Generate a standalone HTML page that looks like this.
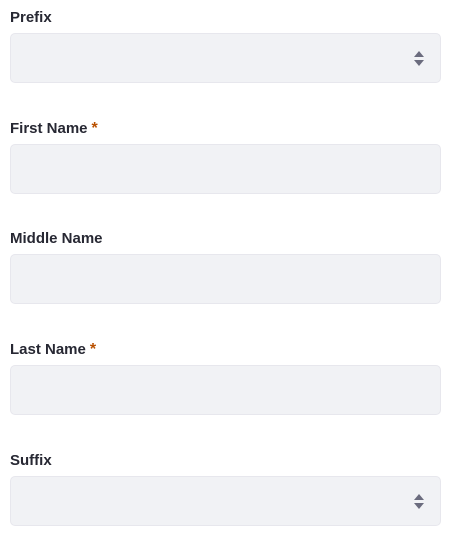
<!DOCTYPE html>
<html><head><style>
body{margin:0;background:#fff;font-family:"Liberation Sans",sans-serif;}
.f{position:absolute;left:10px;width:431px;}
.l{position:absolute;left:0;top:2px;font-size:15px;font-weight:bold;color:#272833;line-height:16px;}
.l span{color:#b95000;margin-left:4px;font-size:16px;}
.i{position:absolute;left:0;width:429px;height:48px;background:#f1f2f5;border:1px solid #e7e7ed;border-radius:5px;}
svg{position:absolute;right:15px;top:16px;}
</style></head><body>
<div class="f" style="top:8px"><div class="l">Prefix</div><div class="i" style="top:25px"><svg width="12" height="17" viewBox="0 0 12 17"><path d="M1 7L6 1L11 7Z M1 10L11 10L6 16Z" fill="#6b6c7e"/></svg></div></div>
<div class="f" style="top:119px"><div class="l">First Name<span>*</span></div><div class="i" style="top:25px"></div></div>
<div class="f" style="top:229px"><div class="l">Middle Name</div><div class="i" style="top:25px"></div></div>
<div class="f" style="top:340px"><div class="l">Last Name<span>*</span></div><div class="i" style="top:25px"></div></div>
<div class="f" style="top:451px"><div class="l">Suffix</div><div class="i" style="top:25px"><svg width="12" height="17" viewBox="0 0 12 17"><path d="M1 7L6 1L11 7Z M1 10L11 10L6 16Z" fill="#6b6c7e"/></svg></div></div>
</body></html>
